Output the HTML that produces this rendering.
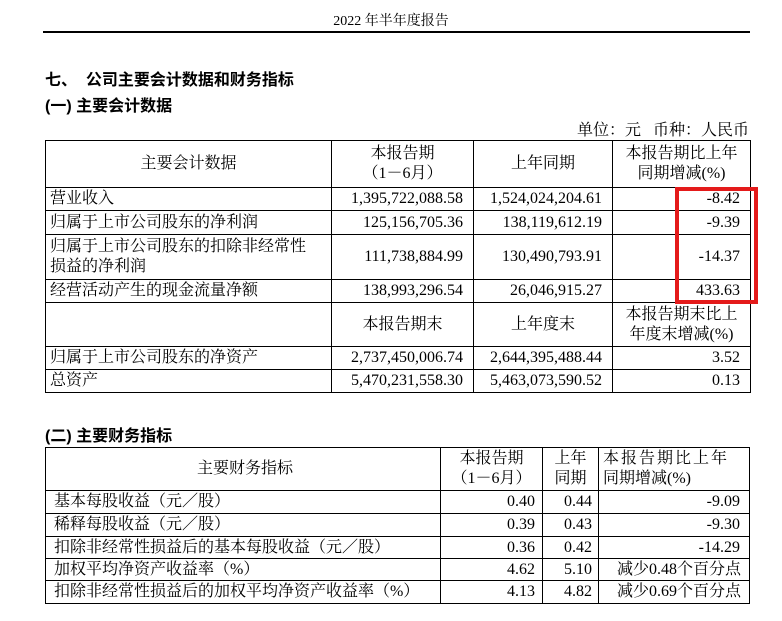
<!DOCTYPE html>
<html><head><meta charset="utf-8">
<style>
body{margin:0;width:782px;height:621px;background:#fff;position:relative;overflow:hidden;font-family:"Liberation Serif","Noto Serif CJK SC",serif;color:#000}
.a{position:absolute}
.hd{left:0;width:782px;top:10px;text-align:center;font-size:14px}
.hl{left:43px;width:707px;top:31px;height:2px;background:#000}
.h{font-family:"Liberation Sans","Noto Sans CJK SC",sans-serif;font-weight:bold;font-size:16px}
table{position:absolute;border-collapse:collapse;font-size:16px;table-layout:fixed}
td{border:1px solid #000;padding:0 4px;line-height:20px;white-space:nowrap;overflow:hidden}
.r{text-align:right;padding-right:10px}
.c{text-align:center}
.t2 td:first-child{padding-left:8px}
</style></head><body>
<div class="a hd">2022 年半年度报告</div>
<div class="a hl"></div>
<div class="a h" style="left:45px;top:66px">七、&nbsp; 公司主要会计数据和财务指标</div>
<div class="a h" style="left:45px;top:92px">(一) 主要会计数据</div>
<div class="a" style="right:33px;top:117px;font-size:16px">单位：元&nbsp;&nbsp; 币种：人民币</div>
<table style="left:45px;top:140px;width:705px">
<colgroup><col style="width:286px"><col style="width:142px"><col style="width:139px"><col style="width:138px"></colgroup>
<tr style="height:47px"><td class="c">主要会计数据</td><td class="c">本报告期<br>（1－6月）</td><td class="c">上年同期</td><td class="c">本报告期比上年<br>同期增减(%)</td></tr>
<tr style="height:23px"><td>营业收入</td><td class="r">1,395,722,088.58</td><td class="r">1,524,024,204.61</td><td class="r">-8.42</td></tr>
<tr style="height:24px"><td>归属于上市公司股东的净利润</td><td class="r">125,156,705.36</td><td class="r">138,119,612.19</td><td class="r">-9.39</td></tr>
<tr style="height:45px"><td>归属于上市公司股东的扣除非经常性<br>损益的净利润</td><td class="r">111,738,884.99</td><td class="r">130,490,793.91</td><td class="r">-14.37</td></tr>
<tr style="height:23px"><td>经营活动产生的现金流量净额</td><td class="r">138,993,296.54</td><td class="r">26,046,915.27</td><td class="r">433.63</td></tr>
<tr style="height:44px"><td></td><td class="c">本报告期末</td><td class="c">上年度末</td><td class="c">本报告期末比上<br>年度末增减(%)</td></tr>
<tr style="height:23px"><td>归属于上市公司股东的净资产</td><td class="r">2,737,450,006.74</td><td class="r">2,644,395,488.44</td><td class="r">3.52</td></tr>
<tr style="height:23px"><td>总资产</td><td class="r">5,470,231,558.30</td><td class="r">5,463,073,590.52</td><td class="r">0.13</td></tr>
</table>
<div class="a" style="left:675px;top:187px;width:75px;height:109px;border:4px solid #e41a1a"></div>
<div class="a h" style="left:45px;top:422px">(二) 主要财务指标</div>
<table class="t2" style="left:45px;top:447px;width:704px">
<colgroup><col style="width:395px"><col style="width:102px"><col style="width:56px"><col style="width:151px"></colgroup>
<tr style="height:43px"><td class="c">主要财务指标</td><td class="c">本报告期<br>（1－6月）</td><td class="c">上年<br>同期</td><td style="letter-spacing:2px">本报告期比上年<br><span style="letter-spacing:0">同期增减(%)</span></td></tr>
<tr style="height:23px"><td>基本每股收益（元／股）</td><td class="r" style="padding-right:7px">0.40</td><td class="r" style="padding-right:6px">0.44</td><td class="r" style="padding-right:9px">-9.09</td></tr>
<tr style="height:23px"><td>稀释每股收益（元／股）</td><td class="r" style="padding-right:7px">0.39</td><td class="r" style="padding-right:6px">0.43</td><td class="r" style="padding-right:9px">-9.30</td></tr>
<tr style="height:22px"><td>扣除非经常性损益后的基本每股收益（元／股）</td><td class="r" style="padding-right:7px">0.36</td><td class="r" style="padding-right:6px">0.42</td><td class="r" style="padding-right:9px">-14.29</td></tr>
<tr style="height:22px"><td>加权平均净资产收益率（%）</td><td class="r" style="padding-right:7px">4.62</td><td class="r" style="padding-right:6px">5.10</td><td class="r" style="padding-right:8px">减少0.48个百分点</td></tr>
<tr style="height:23px"><td>扣除非经常性损益后的加权平均净资产收益率（%）</td><td class="r" style="padding-right:7px">4.13</td><td class="r" style="padding-right:6px">4.82</td><td class="r" style="padding-right:8px">减少0.69个百分点</td></tr>
</table>
</body></html>
